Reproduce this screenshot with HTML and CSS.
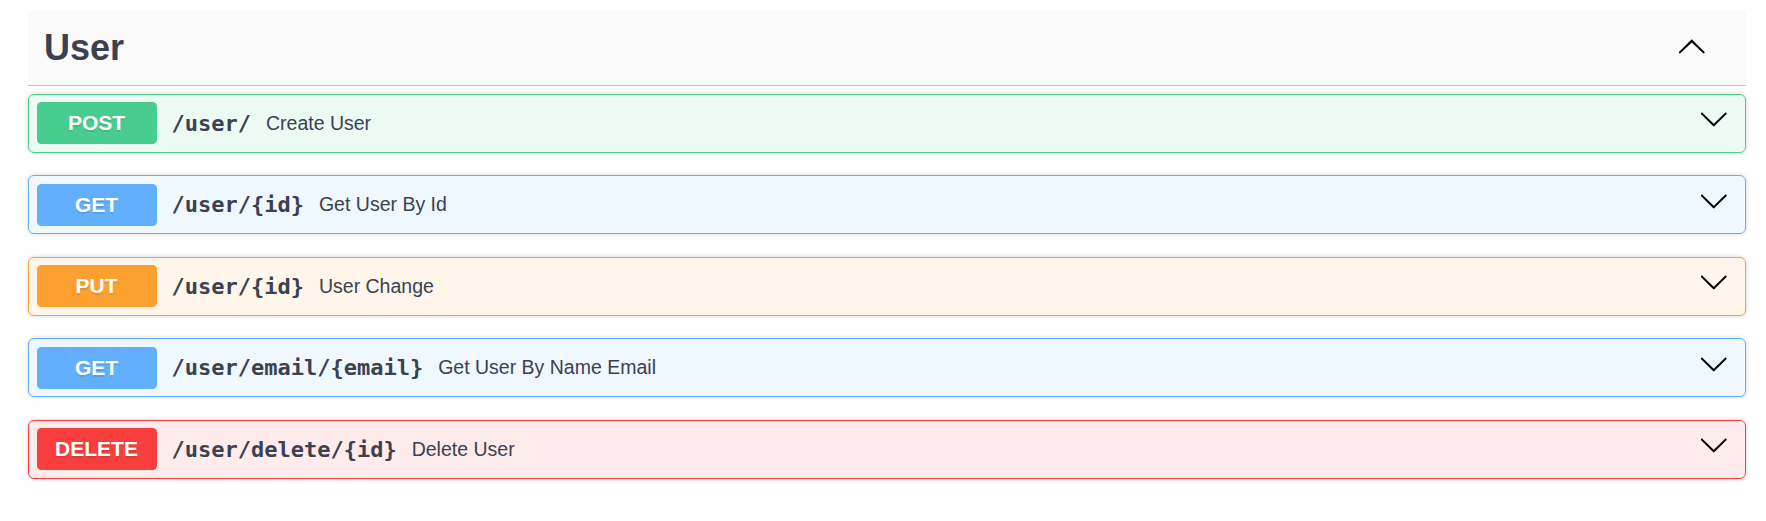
FILE: index.html
```html
<!DOCTYPE html>
<html lang="en">
<head>
<meta charset="utf-8">
<title>User</title>
<link rel="stylesheet" href="styles.css">
</head>
<body>
<div class="section">
  <div class="tag">
    <h3 class="tag-title">User</h3>
    <svg class="tag-arrow" viewBox="1.5 5.5 17 10" aria-hidden="true"><path d="M17.418 14.908c.272.268.709.268.979 0s.271-.701 0-.969l-7.908-7.83c-.27-.268-.707-.268-.979 0l-7.908 7.83c-.27.268-.27.701 0 .969.271.268.709.268.979 0L10 7.759l7.418 7.149z"/></svg>
  </div>

  <div class="opblock post">
    <span class="method">POST</span>
    <span class="path">/user/</span>
    <span class="desc">Create User</span>
    <svg class="arrow" viewBox="1.5 5.5 17 10" aria-hidden="true"><path d="M17.418 6.109c.272-.268.709-.268.979 0s.271.701 0 .969l-7.908 7.83c-.27.268-.707.268-.979 0l-7.908-7.83c-.27-.268-.27-.701 0-.969.271-.268.709-.268.979 0L10 13.25l7.418-7.141z"/></svg>
  </div>

  <div class="opblock get">
    <span class="method">GET</span>
    <span class="path">/user/{id}</span>
    <span class="desc">Get User By Id</span>
    <svg class="arrow" viewBox="1.5 5.5 17 10" aria-hidden="true"><path d="M17.418 6.109c.272-.268.709-.268.979 0s.271.701 0 .969l-7.908 7.83c-.27.268-.707.268-.979 0l-7.908-7.83c-.27-.268-.27-.701 0-.969.271-.268.709-.268.979 0L10 13.25l7.418-7.141z"/></svg>
  </div>

  <div class="opblock put">
    <span class="method">PUT</span>
    <span class="path">/user/{id}</span>
    <span class="desc">User Change</span>
    <svg class="arrow" viewBox="1.5 5.5 17 10" aria-hidden="true"><path d="M17.418 6.109c.272-.268.709-.268.979 0s.271.701 0 .969l-7.908 7.83c-.27.268-.707.268-.979 0l-7.908-7.83c-.27-.268-.27-.701 0-.969.271-.268.709-.268.979 0L10 13.25l7.418-7.141z"/></svg>
  </div>

  <div class="opblock get">
    <span class="method">GET</span>
    <span class="path">/user/email/{email}</span>
    <span class="desc">Get User By Name Email</span>
    <svg class="arrow" viewBox="1.5 5.5 17 10" aria-hidden="true"><path d="M17.418 6.109c.272-.268.709-.268.979 0s.271.701 0 .969l-7.908 7.83c-.27.268-.707.268-.979 0l-7.908-7.83c-.27-.268-.27-.701 0-.969.271-.268.709-.268.979 0L10 13.25l7.418-7.141z"/></svg>
  </div>

  <div class="opblock delete">
    <span class="method">DELETE</span>
    <span class="path">/user/delete/{id}</span>
    <span class="desc">Delete User</span>
    <svg class="arrow" viewBox="1.5 5.5 17 10" aria-hidden="true"><path d="M17.418 6.109c.272-.268.709-.268.979 0s.271.701 0 .969l-7.908 7.83c-.27.268-.707.268-.979 0l-7.908-7.83c-.27-.268-.27-.701 0-.969.271-.268.709-.268.979 0L10 13.25l7.418-7.141z"/></svg>
  </div>
</div>
</body>
</html>
```

FILE: styles.css
```css
html, body {
  margin: 0;
  background: #ffffff;
}

body {
  padding: 11px 20px 0 28px;
  font-family: "Liberation Sans", Arial, sans-serif;
  color: #3b4151;
}

.tag {
  display: flex;
  align-items: center;
  height: 74px;
  padding: 0 41.5px 0 16px;
  background: #fafafa;
  border-bottom: 1px solid rgba(59, 65, 81, 0.3);
  margin-bottom: 7.5px;
}

.tag-title {
  flex: 1;
  margin: 0;
  font-family: "Liberation Sans", Arial, sans-serif;
  font-weight: 700;
  font-size: 36px;
  color: #3b4151;
}

.tag-arrow {
  width: 25.5px;
  height: 15px;
  margin-bottom: 4px;
  fill: #000;
}

.opblock {
  display: flex;
  align-items: center;
  padding: 7.5px;
  border: 1px solid #000;
  border-radius: 6px;
  box-shadow: 0 0 4.5px rgba(0, 0, 0, 0.19);
  margin-bottom: 22.5px;
}

.method {
  min-width: 120px;
  padding: 9px 0;
  line-height: 24px;
  font-family: "Liberation Sans", Arial, sans-serif;
  font-weight: 700;
  font-size: 21px;
  color: #fff;
  text-align: center;
  border-radius: 4.5px;
  text-shadow: 0 1.5px 0 rgba(0, 0, 0, 0.1);
}

.path {
  padding: 0 15px;
  font-family: "DejaVu Sans Mono", "Liberation Mono", monospace;
  font-weight: 700;
  font-size: 22px;
  color: #3b4151;
}

.desc {
  flex: 1;
  font-family: "Liberation Sans", Arial, sans-serif;
  font-size: 19.5px;
  color: #3b4151;
}

.arrow {
  width: 25.5px;
  height: 15px;
  margin-right: 11px;
  margin-bottom: 7px;
  fill: #000;
}

.post {
  border-color: #49cc90;
  background: rgba(73, 204, 144, 0.1);
}
.post .method { background: #49cc90; }

.get {
  border-color: #61affe;
  background: rgba(97, 175, 254, 0.1);
}
.get .method { background: #61affe; }

.put {
  border-color: #fca130;
  background: rgba(252, 161, 48, 0.1);
}
.put .method { background: #fca130; }

.delete {
  border-color: #f93e3e;
  background: rgba(249, 62, 62, 0.1);
}
.delete .method { background: #f93e3e; }
```
